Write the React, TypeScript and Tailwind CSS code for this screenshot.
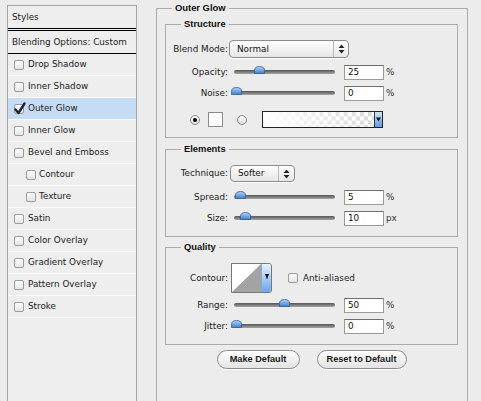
import React from 'react';

type StyleItem = { label: string; checked?: boolean; selected?: boolean; indent?: boolean };

const styleItems: StyleItem[] = [
  { label: 'Drop Shadow' },
  { label: 'Inner Shadow' },
  { label: 'Outer Glow', checked: true, selected: true },
  { label: 'Inner Glow' },
  { label: 'Bevel and Emboss' },
  { label: 'Contour', indent: true },
  { label: 'Texture', indent: true },
  { label: 'Satin' },
  { label: 'Color Overlay' },
  { label: 'Gradient Overlay' },
  { label: 'Pattern Overlay' },
  { label: 'Stroke' },
];

function Check({ checked }: { checked?: boolean }) {
  return (
    <span className="relative block w-[10px] h-[10px] shrink-0 rounded-[2px] border border-[#9d9d9d] bg-gradient-to-b from-white to-[#e4e4e4]">
      {checked && (
        <svg className="absolute -left-[1px] -top-[3px]" width="12" height="13" viewBox="0 0 12 13">
          <path d="M1.5 7.5 L4.5 11 L10.5 1.5" fill="none" stroke="#1b2240" strokeWidth="2.4" strokeLinecap="round" strokeLinejoin="round" />
        </svg>
      )}
    </span>
  );
}

function StylesPanel() {
  return (
    <div className="pt-[5px] pl-[7px] w-[137px] shrink-0">
      <div className="w-[130px] h-[400px] border border-[#a3a3a3] bg-[#eeeeee] text-[#1c1c1c]">
        <div className="h-[23px] flex items-center pl-[4px] border-b border-black">Styles</div>
        <div className="h-[24px] flex items-center pl-[4px] border-t border-b border-black mt-[1px]">
          Blending Options: Custom
        </div>
        {styleItems.map((item) => (
          <div
            key={item.label}
            className={`h-[22px] flex items-center gap-[4px] border-b border-[#fafafa] ${
              item.indent ? 'pl-[18px]' : 'pl-[6px]'
            } ${item.selected ? 'bg-[#c6dcf5]' : ''}`}
          >
            <Check checked={item.checked} />
            <span className={item.indent ? '-ml-[1px]' : ''}>{item.label}</span>
          </div>
        ))}
      </div>
    </div>
  );
}

function Group({ title, className, children }: { title: string; className?: string; children: React.ReactNode }) {
  return (
    <div className={`relative border border-[#ababab] ${className ?? ''}`}>
      <span className="absolute left-[15px] -top-[7px] px-[3px] bg-[#ececec] font-['Liberation_Sans',sans-serif] font-bold text-[9.4px] leading-[12px] text-[#111]">
        {title}
      </span>
      {children}
    </div>
  );
}

function Label({ children }: { children: React.ReactNode }) {
  return <span className="w-[62px] shrink-0 text-right text-[#222]">{children}</span>;
}

function UpDown() {
  return (
    <svg width="7" height="10" viewBox="0 0 7 10">
      <path d="M3.5 0.5 L6.5 4 L0.5 4 Z" fill="#222" />
      <path d="M3.5 9.5 L6.5 6 L0.5 6 Z" fill="#222" />
    </svg>
  );
}

function Select({ value, width, arrowWidth, className }: { value: string; width: string; arrowWidth: string; className?: string }) {
  return (
    <div
      className={`${width} h-full flex rounded-[4px] border border-[#8c8c8c] bg-gradient-to-b from-white to-[#e6e6e6] shadow-[0_1px_0_#fff] ${className ?? ''}`}
    >
      <span className="flex-1 flex items-center pl-[7px] text-[#111]">{value}</span>
      <span className={`${arrowWidth} flex items-center justify-center border-l border-[#b8b8b8]`}>
        <UpDown />
      </span>
    </div>
  );
}

function Slider({ thumb }: { thumb: number }) {
  return (
    <div className="relative ml-[3px] w-[106px] h-full shrink-0">
      <div className="absolute left-[3px] right-[2px] top-[5px] h-[4px] rounded-full bg-gradient-to-b from-[#555] to-[#a5a5a5]" />
      <svg className="absolute top-[1px]" style={{ left: thumb - 5.5 }} width="11" height="8" viewBox="0 0 11 8">
        <defs>
          <linearGradient id="thumbGrad" x1="0" y1="0" x2="0" y2="1">
            <stop offset="0" stopColor="#b9d4f2" />
            <stop offset="1" stopColor="#3d7dd0" />
          </linearGradient>
        </defs>
        <path d="M0.5 7.5 V4.5 Q0.5 0.5 5.5 0.5 Q10.5 0.5 10.5 4.5 V7.5 Z" fill="url(#thumbGrad)" stroke="#2f5d99" strokeWidth="0.8" />
      </svg>
    </div>
  );
}

function SliderRow({ label, thumb, value, unit, className }: { label: string; thumb: number; value: string; unit: string; className?: string }) {
  return (
    <div className={`h-[15px] flex items-center ${className ?? ''}`}>
      <Label>{label}</Label>
      <Slider thumb={thumb} />
      <span className="ml-[7px] w-[40px] h-[15px] shrink-0 flex items-center pl-[3px] bg-white border border-[#9a9a9a] border-t-[#6f6f6f] text-[#111]">
        {value}
      </span>
      <span className="ml-[2px] text-[#333]">{unit}</span>
    </div>
  );
}

function Radio({ on }: { on?: boolean }) {
  return (
    <span className="w-[10px] h-[10px] shrink-0 rounded-full border border-[#8a8a8a] bg-gradient-to-b from-white to-[#dcdcdc] flex items-center justify-center">
      {on && <span className="w-[4px] h-[4px] rounded-full bg-black" />}
    </span>
  );
}

function DownArrow() {
  return (
    <svg width="5" height="5" viewBox="0 0 5 5">
      <path d="M0 0.5 H5 L2.5 4.5 Z" fill="#111" />
    </svg>
  );
}

function GradientSwatch() {
  return (
    <div className="ml-[15px] w-[121px] h-[17px] flex border-[1.5px] border-[#222] bg-white">
      <svg className="flex-1 h-full" viewBox="0 0 110 14" preserveAspectRatio="none">
        <defs>
          <pattern id="checker" width="8" height="8" patternUnits="userSpaceOnUse">
            <rect width="8" height="8" fill="#fff" />
            <rect width="4" height="4" fill="#d9d9d9" />
            <rect x="4" y="4" width="4" height="4" fill="#d9d9d9" />
          </pattern>
          <linearGradient id="fade" x1="0" y1="0" x2="1" y2="0">
            <stop offset="0" stopColor="#fff" stopOpacity="1" />
            <stop offset="1" stopColor="#fff" stopOpacity="0" />
          </linearGradient>
        </defs>
        <rect width="110" height="14" fill="url(#checker)" />
        <rect width="110" height="14" fill="url(#fade)" />
      </svg>
      <span className="w-[8px] flex items-center justify-center border-l border-[#333] bg-gradient-to-b from-[#cfe3fa] to-[#5d9ce6]">
        <DownArrow />
      </span>
    </div>
  );
}

function ContourPicker() {
  return (
    <div className="ml-[3px] w-[41px] h-[30px] flex border border-[#777] rounded-r-[3px] overflow-hidden">
      <svg width="29" height="28" viewBox="0 0 29 28">
        <rect width="29" height="28" fill="#fff" />
        <path d="M0 28 L29 0 L29 28 Z" fill="#a3a3a3" />
      </svg>
      <span className="flex-1 flex justify-center pt-[9px] border-l border-[#8aa9cc] bg-gradient-to-b from-[#e9f3fd] via-[#a9cdf5] to-[#6aa6ea]">
        <svg width="4" height="7" viewBox="0 0 4 7">
          <path d="M0 1 H4 L2 6.5 Z" fill="#111" />
        </svg>
      </span>
    </div>
  );
}

function PillButton({ label, width }: { label: string; width: string }) {
  return (
    <span
      className={`${width} h-[19px] flex items-center justify-center rounded-full border border-[#8d8d8d] bg-gradient-to-b from-white to-[#e3e3e3] shadow-[0_1px_0_#fff] font-['Liberation_Sans',sans-serif] font-bold text-[9.2px] text-[#1a1a1a]`}
    >
      {label}
    </span>
  );
}

function OuterGlowPanel() {
  return (
    <div className="ml-[19px] pt-[8px]">
      <Group title="Outer Glow" className="w-[312px] h-[400px] pl-[8px] pt-[15px]">
        <Group title="Structure" className="w-[293px] pt-[15px] pb-[9px]">
          <div className="h-[18px] flex items-center">
            <Label>Blend Mode:</Label>
            <Select value="Normal" width="w-[120px]" arrowWidth="w-[15px]" className="ml-[1px]" />
          </div>
          <SliderRow className="mt-[7px]" label="Opacity:" thumb={28} value="25" unit="%" />
          <SliderRow className="mt-[6px]" label="Noise:" thumb={5} value="0" unit="%" />
          <div className="mt-[10px] h-[17px] flex items-center">
            <span className="ml-[24px]">
              <Radio on />
            </span>
            <span className="ml-[8px] w-[15px] h-[15px] border border-[#8c8c8c] bg-white" />
            <span className="ml-[14px]">
              <Radio />
            </span>
            <GradientSwatch />
          </div>
        </Group>

        <Group title="Elements" className="w-[293px] mt-[11px] pt-[15px] pb-[10px]">
          <div className="h-[17px] flex items-center">
            <Label>Technique:</Label>
            <Select value="Softer" width="w-[65px]" arrowWidth="w-[16px]" className="ml-[2px]" />
          </div>
          <SliderRow className="mt-[8px]" label="Spread:" thumb={9} value="5" unit="%" />
          <SliderRow className="mt-[6px]" label="Size:" thumb={14} value="10" unit="px" />
        </Group>

        <Group title="Quality" className="w-[293px] mt-[10px] pt-[15px] pb-[10px]">
          <div className="h-[30px] flex items-center">
            <Label>Contour:</Label>
            <ContourPicker />
            <span className="ml-[16px]">
              <Check />
            </span>
            <span className="ml-[5px] text-[#222]">Anti-aliased</span>
          </div>
          <SliderRow className="mt-[5px]" label="Range:" thumb={53} value="50" unit="%" />
          <SliderRow className="mt-[6px]" label="Jitter:" thumb={5} value="0" unit="%" />
        </Group>

        <div className="w-[293px] mt-[5px] flex justify-center gap-[17px]">
          <PillButton label="Make Default" width="w-[83px]" />
          <PillButton label="Reset to Default" width="w-[90px]" />
        </div>
      </Group>
    </div>
  );
}

export default function App() {
  return (
    <div className="w-[481px] h-[401px] overflow-hidden flex bg-[#ececec] font-['DejaVu_Sans',sans-serif] text-[8.8px] leading-none">
      <StylesPanel />
      <OuterGlowPanel />
    </div>
  );
}
